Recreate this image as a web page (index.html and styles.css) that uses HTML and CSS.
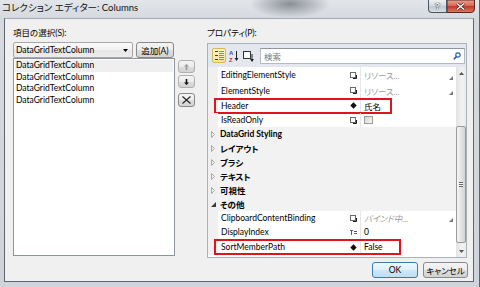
FILE: index.html
```html
<!DOCTYPE html>
<html lang="ja">
<head>
    <meta charset="UTF-8">
    <meta name="viewport" content="width=device-width, initial-scale=1.0">
    <title>コレクション エディター: Columns</title>
    <link rel="stylesheet" href="styles.css">
</head>
<body>
    <div class="window">
        <div class="titlebar">
            <span class="title">コレクション エディター: Columns</span>
            <div class="caption-buttons">
                <div class="cap-btn help-btn">?</div>
                <svg class="quit-icon" width="28" height="13" viewBox="0 0 28 13">
                    <defs>
                        <linearGradient id="quitFill" x1="0" y1="0" x2="0" y2="1">
                            <stop offset="0" stop-color="#eba496"/>
                            <stop offset="0.5" stop-color="#d9604c"/>
                            <stop offset="0.52" stop-color="#c53a27"/>
                            <stop offset="1" stop-color="#dc7b66"/>
                        </linearGradient>
                    </defs>
                    <path d="M0 0H27.5V9A3.5 3.5 0 0 1 24 12.5H0z" fill="url(#quitFill)" stroke="#5a2620"/>
                    <path d="M10 3.5L17 9.5M17 3.5L10 9.5" stroke="#3b1410" stroke-width="2.6"/>
                    <path d="M10 3.5L17 9.5M17 3.5L10 9.5" stroke="#fff" stroke-width="1.5"/>
                </svg>
            </div>
        </div>

        <div class="client">
            <div class="main">
                <!-- Items -->
                <div class="items-pane">
                    <div class="field-label">項目の選択(S):</div>
                    <div class="combo-row">
                        <div class="combo">
                            <span>DataGridTextColumn</span>
                            <svg class="combo-arrow" width="5" height="3" viewBox="0 0 5 3"><path d="M0 0H5L2.5 3z" fill="#000"/></svg>
                        </div>
                        <button class="btn add-btn">追加(A)</button>
                    </div>
                    <ul class="item-list">
                        <li class="selected">DataGridTextColumn</li>
                        <li>DataGridTextColumn</li>
                        <li>DataGridTextColumn</li>
                        <li>DataGridTextColumn</li>
                    </ul>
                </div>

                <div class="move-buttons">
                    <button class="btn small-btn">
                        <svg width="5" height="6" viewBox="0 0 5 6"><path d="M2.5 0L5 2.5H3.3V6H1.7V2.5H0z" fill="#9a9a9a"/></svg>
                    </button>
                    <button class="btn small-btn">
                        <svg width="5" height="6" viewBox="0 0 5 6"><path d="M2.5 6L5 3.5H3.3V0H1.7V3.5H0z" fill="#111"/></svg>
                    </button>
                    <button class="btn small-btn delete-btn">
                        <svg width="9" height="8" viewBox="0 0 9 8"><path d="M0.5 0.5L8.5 7.5M8.5 0.5L0.5 7.5" stroke="#222" stroke-width="1.1"/></svg>
                    </button>
                </div>

                <!-- Properties -->
                <div class="props-pane">
                    <div class="field-label">プロパティ(P):</div>
                    <div class="prop-grid">
                        <div class="toolbar">
                            <span class="tool-btn active">
                                <svg width="9" height="9" viewBox="0 0 9 9"><path d="M0 0.5h3M0 4.5h3M0 8.5h3" stroke="#3c3c3c"/><path d="M4 0.5h5M4 2.5h5M4 4.5h5M4 6.5h5M4 8.5h5" stroke="#7d8aa0"/></svg>
                            </span>
                            <span class="tool-btn sort">
                                <svg width="10" height="12" viewBox="0 0 10 12"><text x="0" y="5" font-size="6" font-family="Liberation Sans" font-weight="bold" fill="#2a55b0">A</text><text x="0" y="11.5" font-size="6" font-family="Liberation Sans" font-weight="bold" fill="#c0302a">Z</text><path d="M7.5 1V10" stroke="#222"/><path d="M5.5 8L7.5 11 9.5 8z" fill="#222"/></svg>
                            </span>
                            <span class="tool-btn pages">
                                <svg width="11" height="12" viewBox="0 0 11 12"><rect x="0.5" y="1.5" width="7" height="7" fill="#fff" stroke="#333"/><path d="M9 4V11" stroke="#222"/><path d="M7 9L9 12 11 9z" fill="#222"/></svg>
                            </span>
                            <div class="search">
                                <span class="placeholder">検索</span>
                                <svg width="8" height="8" viewBox="0 0 8 8"><circle cx="5" cy="3" r="2.2" fill="none" stroke="#1f5db8" stroke-width="1.2"/><path d="M3.4 4.6L0.8 7.2" stroke="#1f5db8" stroke-width="1.6"/></svg>
                            </div>
                        </div>

                        <div class="grid-body">
                            <div class="rows">
                                <div class="prop-row h16">
                                    <span class="gutter"></span>
                                    <span class="pname">EditingElementStyle</span>
                                    <span class="marker"><svg width="7" height="7" viewBox="0 0 7 7"><rect x="0.5" y="0.5" width="5" height="5" fill="#fff" stroke="#6a6a6a"/><path d="M3 6.5H6.5V3" stroke="#1a1a1a" fill="none"/></svg></span>
                                    <span class="pvalue muted">リソース...<svg class="corner" width="4" height="4" viewBox="0 0 4 4"><path d="M4 0V4H0z" fill="#777"/></svg></span>
                                </div>
                                <div class="prop-row h15">
                                    <span class="gutter"></span>
                                    <span class="pname">ElementStyle</span>
                                    <span class="marker"><svg width="7" height="7" viewBox="0 0 7 7"><rect x="0.5" y="0.5" width="5" height="5" fill="#fff" stroke="#6a6a6a"/><path d="M3 6.5H6.5V3" stroke="#1a1a1a" fill="none"/></svg></span>
                                    <span class="pvalue muted">リソース...<svg class="corner" width="4" height="4" viewBox="0 0 4 4"><path d="M4 0V4H0z" fill="#777"/></svg></span>
                                </div>
                                <div class="prop-row h15">
                                    <span class="gutter"></span>
                                    <span class="pname">Header</span>
                                    <span class="marker"><svg width="7" height="7" viewBox="0 0 7 7"><path d="M3.5 0.3L6.7 3.5 3.5 6.7 0.3 3.5z" fill="#111"/></svg></span>
                                    <span class="pvalue">氏名</span>
                                    <span class="callout header-callout"></span>
                                </div>
                                <div class="prop-row h14">
                                    <span class="gutter"></span>
                                    <span class="pname">IsReadOnly</span>
                                    <span class="marker"><svg width="7" height="7" viewBox="0 0 7 7"><rect x="0.5" y="0.5" width="5" height="5" fill="#fff" stroke="#6a6a6a"/><path d="M3 6.5H6.5V3" stroke="#1a1a1a" fill="none"/></svg></span>
                                    <span class="pvalue"><span class="checkbox"></span></span>
                                </div>

                                <div class="cat-row">
                                    <span class="gutter"><svg width="4" height="7" viewBox="0 0 4 7"><path d="M0.5 0.5L3.5 3.5 0.5 6.5z" fill="none" stroke="#a8a8a8"/></svg></span>
                                    <span class="cname">DataGrid Styling</span>
                                </div>
                                <div class="cat-row">
                                    <span class="gutter"><svg width="4" height="7" viewBox="0 0 4 7"><path d="M0.5 0.5L3.5 3.5 0.5 6.5z" fill="none" stroke="#a8a8a8"/></svg></span>
                                    <span class="cname">レイアウト</span>
                                </div>
                                <div class="cat-row">
                                    <span class="gutter"><svg width="4" height="7" viewBox="0 0 4 7"><path d="M0.5 0.5L3.5 3.5 0.5 6.5z" fill="none" stroke="#a8a8a8"/></svg></span>
                                    <span class="cname">ブラシ</span>
                                </div>
                                <div class="cat-row">
                                    <span class="gutter"><svg width="4" height="7" viewBox="0 0 4 7"><path d="M0.5 0.5L3.5 3.5 0.5 6.5z" fill="none" stroke="#a8a8a8"/></svg></span>
                                    <span class="cname">テキスト</span>
                                </div>
                                <div class="cat-row">
                                    <span class="gutter"><svg width="4" height="7" viewBox="0 0 4 7"><path d="M0.5 0.5L3.5 3.5 0.5 6.5z" fill="none" stroke="#a8a8a8"/></svg></span>
                                    <span class="cname">可視性</span>
                                </div>
                                <div class="cat-row">
                                    <span class="gutter"><svg width="5" height="5" viewBox="0 0 5 5"><path d="M5 0V5H0z" fill="#3a3a3a"/></svg></span>
                                    <span class="cname">その他</span>
                                </div>

                                <div class="prop-row h14">
                                    <span class="gutter"></span>
                                    <span class="pname">ClipboardContentBinding</span>
                                    <span class="marker"><svg width="7" height="7" viewBox="0 0 7 7"><rect x="0.5" y="0.5" width="5" height="5" fill="#fff" stroke="#6a6a6a"/><path d="M3 6.5H6.5V3" stroke="#1a1a1a" fill="none"/></svg></span>
                                    <span class="pvalue muted italic">バインド中...<svg class="corner" width="4" height="4" viewBox="0 0 4 4"><path d="M4 0V4H0z" fill="#777"/></svg></span>
                                </div>
                                <div class="prop-row h14">
                                    <span class="gutter"></span>
                                    <span class="pname">DisplayIndex</span>
                                    <span class="marker"><svg width="7" height="5" viewBox="0 0 7 5"><path d="M0 0.5H3M1.5 0.5V5M4 1.5H7M4 3.5H7" stroke="#7b3f9e"/></svg></span>
                                    <span class="pvalue">0</span>
                                </div>
                                <div class="prop-row h16">
                                    <span class="gutter"></span>
                                    <span class="pname">SortMemberPath</span>
                                    <span class="marker"><svg width="7" height="7" viewBox="0 0 7 7"><path d="M3.5 0.3L6.7 3.5 3.5 6.7 0.3 3.5z" fill="#111"/></svg></span>
                                    <span class="pvalue">False</span>
                                    <span class="callout sort-callout"></span>
                                </div>
                            </div>

                            <!-- Scrollbar -->
                            <div class="scrollbar">
                                <div class="sb-arrow">
                                    <svg width="5" height="3" viewBox="0 0 5 3"><path d="M2.5 0L5 3H0z" fill="#555"/></svg>
                                </div>
                                <div class="sb-track">
                                    <div class="sb-thumb"><span class="grip"></span></div>
                                </div>
                                <div class="sb-arrow">
                                    <svg width="5" height="3" viewBox="0 0 5 3"><path d="M0 0H5L2.5 3z" fill="#555"/></svg>
                                </div>
                            </div>
                        </div>
                    </div>
                </div>
            </div>

            <div class="footer">
                <button class="btn default-btn">OK</button>
                <button class="btn cancel-btn">キャンセル</button>
            </div>
        </div>
    </div>
</body>
</html>
```

FILE: styles.css
```css
* {
    box-sizing: border-box;
}
body {
    margin: 0;
    font-family: Lato, "Noto Sans CJK JP", sans-serif;
    font-size: 8.5px;
    font-feature-settings: "palt" 1;
    color: #000;
    background: #c8ced6;
}
.window {
    width: 480px;
    height: 287px;
    display: flex;
    flex-direction: column;
    background: radial-gradient(ellipse 40px 14px at 290px 4px, #8a8f96, rgba(138, 143, 150, 0)),
                linear-gradient(180deg, #e2e5e9 0, #d6dade 18px, #cfd4da 100%);
    border-right: 1px solid #5d636d;
}

/* Title bar */
.titlebar {
    height: 18px;
    flex: none;
    display: flex;
    align-items: flex-start;
}
.title {
    padding: 2px 0 0 2px;
    line-height: 12px;
    font-size: 9.5px;
    color: #111;
}
.caption-buttons {
    margin-left: auto;
    margin-right: 4px;
    display: flex;
    height: 13px;
}
.cap-btn {
    flex: none;
    height: 13px;
    display: flex;
    align-items: center;
    justify-content: center;
    border: 1px solid #4d5560;
    border-top: none;
}
.help-btn {
    width: 19px;
    border-radius: 0 0 0 4px;
    background: linear-gradient(#eef0f3, #d2d7de 50%, #bfc6cf 51%, #d9dee4);
    color: #fff;
    font-family: "Liberation Sans", sans-serif;
    font-weight: bold;
    font-size: 9px;
    text-shadow: 0 0 1px #222, 0 0 1px #222;
}
.quit-icon {
    flex: none;
    display: block;
}

/* Client area */
.client {
    flex: 1;
    margin: 0 5px 5px 4px;
    border: 1px solid #5f6672;
    border-top-color: #a3aab4;
    background: #f0f0f0;
    display: flex;
    flex-direction: column;
    padding: 7px 6px 3px 8px;
}
.main {
    height: 232px;
    display: flex;
}
.field-label {
    height: 14px;
    line-height: 14px;
}

/* Left pane */
.items-pane {
    width: 162px;
    display: flex;
    flex-direction: column;
}
.combo-row {
    margin-top: 2px;
    height: 16px;
    display: flex;
    gap: 3px;
}
.combo {
    width: 120px;
    border: 1px solid #a7a7a7;
    border-radius: 2px;
    background: linear-gradient(#fbfbfb, #f1f1f1 50%, #e6e6e6 51%, #ececec);
    display: flex;
    align-items: center;
    padding: 0 4px 0 2px;
}
.combo-arrow {
    margin-left: auto;
}
.btn {
    font-family: inherit;
    font-size: 8.5px;
    font-feature-settings: "palt" 1;
    white-space: nowrap;
    color: #000;
    padding: 0;
    border: 1px solid #8a8a8a;
    border-radius: 3px;
    background: linear-gradient(#f4f4f4, #ececec 50%, #dedede 51%, #d2d2d2);
    display: flex;
    align-items: center;
    justify-content: center;
}
.add-btn {
    width: 38px;
}
.item-list {
    list-style: none;
    margin: 0;
    padding: 1px 1px 0;
    height: 198px;
    border: 1px solid #8e949c;
    background: #fff;
}
.item-list li {
    height: 11.5px;
    line-height: 11.5px;
    padding-left: 1px;
}
.item-list li.selected {
    background: #efefef;
}

.move-buttons {
    width: 17px;
    margin-left: 3px;
    padding-top: 34px;
    display: flex;
    flex-direction: column;
    gap: 2px;
}
.small-btn {
    height: 13px;
    border-color: #b0b0b0;
}
.delete-btn {
    margin-top: 3px;
    height: 14px;
    border-color: #8a8a8a;
}

/* Property grid */
.props-pane {
    flex: 1;
    margin-left: 12px;
    display: flex;
    flex-direction: column;
}
.prop-grid {
    margin-top: 3px;
    flex: 1;
    border: 1px solid #a9b1bb;
    background: #fff;
    display: flex;
    flex-direction: column;
}
.toolbar {
    height: 23px;
    flex: none;
    background: #e4e8ee;
    display: flex;
    align-items: center;
    padding: 0 1px 0 4px;
}
.tool-btn {
    height: 15px;
    display: flex;
    align-items: center;
    justify-content: center;
}
.tool-btn.active {
    width: 14px;
    border: 1px solid #d9b755;
    border-radius: 2px;
    background: linear-gradient(#fdf3cf, #fbe3a0);
}
.tool-btn.sort {
    width: 11px;
    margin-left: 2px;
}
.tool-btn.pages {
    width: 12px;
    margin-left: 3px;
}
.search {
    margin-left: 6px;
    flex: 1;
    height: 16px;
    border: 1px solid #b4bac3;
    border-top-color: #8f969f;
    background: #fff;
    display: flex;
    align-items: center;
    padding: 0 3px 0 3px;
}
.placeholder {
    color: #777;
}
.search svg {
    margin-left: auto;
}

.grid-body {
    flex: 1;
    display: flex;
}
.rows {
    flex: 1;
    display: flex;
    flex-direction: column;
}
.prop-row,
.cat-row {
    position: relative;
    display: flex;
    align-items: center;
    flex: none;
}
.prop-row.h14 { height: 14px; }
.prop-row.h15 { height: 15px; }
.prop-row.h16 { height: 16px; }
.gutter {
    width: 10px;
    height: 100%;
    background: #f0f0f0;
    display: flex;
    align-items: center;
    justify-content: center;
}
.pname {
    width: 129px;
    padding-left: 3px;
    white-space: nowrap;
}
.marker {
    width: 13px;
    height: 100%;
    display: flex;
    align-items: center;
    justify-content: center;
    border-right: 1px solid #e6e6e6;
    box-sizing: content-box;
}
.pvalue {
    flex: 1;
    height: 100%;
    display: flex;
    align-items: center;
    padding-left: 3px;
    position: relative;
}
.muted {
    color: #9c9c9c;
}
.italic {
    font-style: italic;
}
.corner {
    position: absolute;
    right: 3px;
    bottom: 3px;
}
.checkbox {
    width: 9px;
    height: 8px;
    border: 1px solid #9a9a9a;
    background: linear-gradient(135deg, #d6d6d6, #f6f6f6);
}
.cat-row {
    height: 14px;
    background: #f2f2f2;
}
.cname {
    padding-left: 2px;
    font-weight: bold;
}

/* Red annotation boxes */
.callout {
    position: absolute;
    top: 0;
    left: 6px;
    height: 16px;
    border: 2px solid #e0141e;
}
.header-callout {
    width: 178px;
}
.sort-callout {
    width: 187px;
}

/* Scrollbar */
.scrollbar {
    width: 10px;
    display: flex;
    flex-direction: column;
    background: linear-gradient(90deg, #e3e3e3, #f2f2f2 60%, #ebebeb);
}
.sb-arrow {
    height: 12px;
    display: flex;
    align-items: center;
    justify-content: center;
}
.sb-track {
    flex: 1;
    padding-top: 47px;
}
.sb-thumb {
    height: 117px;
    border: 1px solid #9a9a9a;
    border-radius: 2px;
    background: linear-gradient(90deg, #f5f5f5, #e4e4e4 50%, #d3d3d3);
    display: flex;
    align-items: center;
    justify-content: center;
}
.grip {
    width: 4px;
    height: 5px;
    border-top: 1px solid #666;
    border-bottom: 1px solid #666;
    background: linear-gradient(#fff 0 1px, #666 1px 2px, #fff 2px);
}

/* Footer */
.footer {
    margin-top: 4px;
    margin-right: -1px;
    height: 16px;
    display: flex;
    justify-content: flex-end;
    gap: 5px;
}
.default-btn {
    width: 46px;
    border-color: #3d7bad;
    background: linear-gradient(#eef7fd, #e0f0fb 50%, #cde7f7 51%, #bcdff4);
}
.cancel-btn {
    width: 45px;
}
```
